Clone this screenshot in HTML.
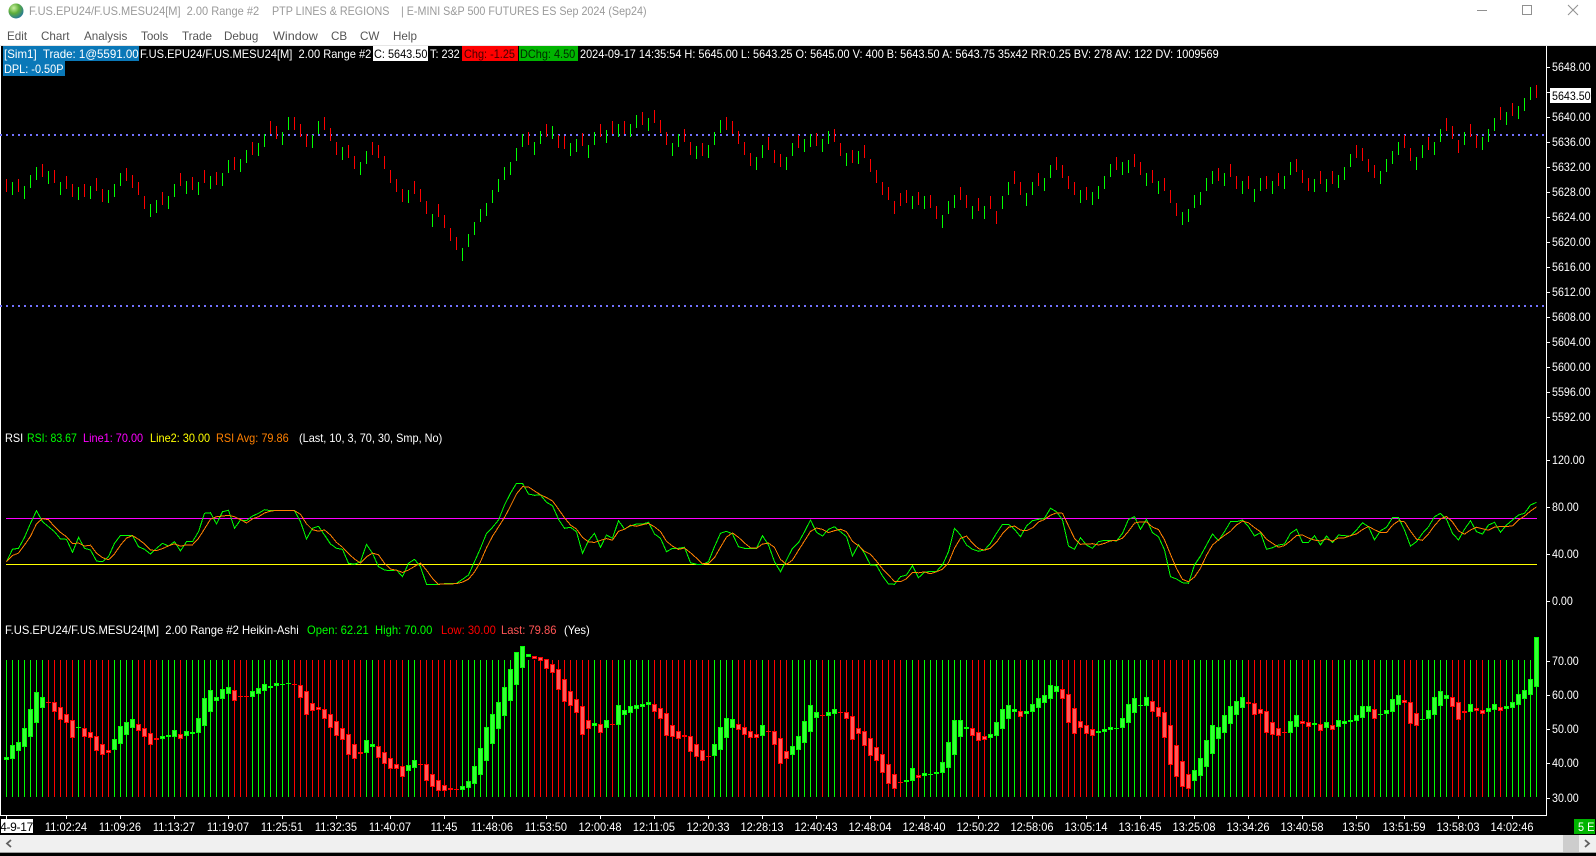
<!DOCTYPE html>
<html><head><meta charset="utf-8"><title>Chart</title>
<style>
html,body{margin:0;padding:0;background:#000;width:1596px;height:856px;overflow:hidden}
body{position:relative;font-family:"Liberation Sans",sans-serif;font-size:12px;color:#fff}
.a{position:absolute}
.t{position:absolute;white-space:pre;line-height:14px;height:14px;transform-origin:0 50%;transform:scaleX(.91)}
.c{position:absolute;white-space:pre;line-height:14px;height:14px;top:820px;transform:translateX(-50%) scaleX(.92)}
.tt{color:#9a9a9a;transform:scaleX(.895);top:4px}
.m{color:#555;transform:scaleX(.97);top:29px}
.y{left:1552px;transform:scaleX(.89)}
.h{top:623px;transform:scaleX(.935)}
</style></head><body>
<div class="a" style="left:0;top:0;width:1596px;height:45px;background:#fff"></div>
<div class="a" style="left:0;top:45px;width:1596px;height:1px;background:#e6e6e6"></div>
<svg class="a" style="left:7px;top:2px" width="18" height="18" viewBox="0 0 18 18"><defs><radialGradient id="gl" cx=".35" cy=".3" r=".8"><stop offset="0" stop-color="#c8f0a0"/><stop offset=".45" stop-color="#5fae3a"/><stop offset="1" stop-color="#1b6fa8"/></radialGradient></defs><circle cx="9" cy="9" r="7.5" fill="url(#gl)"/></svg>
<span class="t tt" style="left:29px;transform:scaleX(.92)">F.US.EPU24/F.US.MESU24[M]  2.00 Range #2</span>
<span class="t tt" style="left:272px">PTP LINES &amp; REGIONS</span>
<span class="t tt" style="left:401px">| E-MINI S&amp;P 500 FUTURES ES Sep 2024 (Sep24)</span>
<span class="t m" style="left:7px">Edit</span><span class="t m" style="left:41px">Chart</span><span class="t m" style="left:84px">Analysis</span><span class="t m" style="left:141px">Tools</span><span class="t m" style="left:182px">Trade</span><span class="t m" style="left:224px">Debug</span><span class="t m" style="left:273px;transform:scaleX(1.05)">Window</span><span class="t m" style="left:331px">CB</span><span class="t m" style="left:360px">CW</span><span class="t m" style="left:393px">Help</span>
<svg class="a" style="left:1470px;top:0" width="126" height="22" fill="none" stroke="#909090" stroke-width="1"><path d="M7 10.5h10"/><rect x="52.5" y="5.5" width="9" height="9"/><path d="M98 5l10 10M108 5l-10 10"/></svg>

<svg id="ch" class="a" style="left:0;top:0" width="1596" height="856" shape-rendering="crispEdges"></svg>

<div class="a" style="left:3px;top:46px;width:136px;height:15px;background:#0a78b8"></div>
<div class="a" style="left:3px;top:61px;width:62px;height:15px;background:#0a78b8"></div>
<div class="a" style="left:373px;top:46px;width:55px;height:15px;background:#fff"></div>
<div class="a" style="left:462px;top:46px;width:56px;height:15px;background:#f00"></div>
<div class="a" style="left:519px;top:46px;width:59px;height:15px;background:#00b400"></div>
<span class="t" style="left:4px;top:47px;transform:scaleX(.96)">[Sim1]  Trade: 1@5591.00</span>
<span class="t" style="left:140px;top:47px;transform:scaleX(.925)">F.US.EPU24/F.US.MESU24[M]  2.00 Range #2</span>
<span class="t" style="left:374px;top:47px;color:#000">C: 5643.50</span>
<span class="t" style="left:430px;top:47px">T: 232</span>
<span class="t" style="left:464px;top:47px;color:#400">Chg: -1.25</span>
<span class="t" style="left:520px;top:47px;color:#002800">DChg: 4.50</span>
<span class="t" style="left:580px;top:47px">2024-09-17 14:35:54 H: 5645.00 L: 5643.25 O: 5645.00 V: 400 B: 5643.50 A: 5643.75 35x42 RR:0.25 BV: 278 AV: 122 DV: 1009569</span>
<span class="t" style="left:4px;top:62px">DPL: -0.50P</span>

<span class="t" style="left:5px;top:431px">RSI</span>
<span class="t" style="left:27px;top:431px;color:#0f0;transform:scaleX(.88)">RSI: 83.67</span>
<span class="t" style="left:83px;top:431px;color:#f0f">Line1: 70.00</span>
<span class="t" style="left:150px;top:431px;color:#ff0">Line2: 30.00</span>
<span class="t" style="left:216px;top:431px;color:#ff8000">RSI Avg: 79.86</span>
<span class="t" style="left:299px;top:431px">(Last, 10, 3, 70, 30, Smp, No)</span>

<span class="t h" style="left:5px">F.US.EPU24/F.US.MESU24[M]  2.00 Range #2 Heikin-Ashi</span>
<span class="t h" style="left:307px;color:#0f0">Open: 62.21</span>
<span class="t h" style="left:375px;color:#0f0">High: 70.00</span>
<span class="t h" style="left:441px;color:#f00">Low: 30.00</span>
<span class="t h" style="left:501px;color:#ff5555">Last: 79.86</span>
<span class="t h" style="left:564px">(Yes)</span>

<span class="t y" style="top:60px">5648.00</span>
<span class="t y" style="top:110px">5640.00</span><span class="t y" style="top:135px">5636.00</span><span class="t y" style="top:160px">5632.00</span><span class="t y" style="top:185px">5628.00</span><span class="t y" style="top:210px">5624.00</span><span class="t y" style="top:235px">5620.00</span><span class="t y" style="top:260px">5616.00</span><span class="t y" style="top:285px">5612.00</span><span class="t y" style="top:310px">5608.00</span><span class="t y" style="top:335px">5604.00</span><span class="t y" style="top:360px">5600.00</span><span class="t y" style="top:385px">5596.00</span><span class="t y" style="top:410px">5592.00</span>
<div class="a" style="left:1550px;top:88px;width:41px;height:15px;background:#fff"></div>
<span class="t" style="left:1552px;top:89px;color:#000;transform:scaleX(.89)">5643.50</span>
<span class="t y" style="top:453px">120.00</span><span class="t y" style="top:500px">80.00</span><span class="t y" style="top:547px">40.00</span><span class="t y" style="top:594px">0.00</span>
<span class="t y" style="top:654px">70.00</span><span class="t y" style="top:688px">60.00</span><span class="t y" style="top:722px">50.00</span><span class="t y" style="top:756px">40.00</span><span class="t y" style="top:791px">30.00</span>

<div class="a" style="left:1px;top:819px;width:32px;height:14px;background:#fff"></div>
<span class="t" style="left:1px;top:820px;color:#000;width:32px;overflow:hidden;direction:rtl;transform:none;letter-spacing:-.3px"><bdi>4-9-17</bdi></span>
<span class="c" style="left:66px">11:02:24</span><span class="c" style="left:120px">11:09:26</span><span class="c" style="left:174px">11:13:27</span><span class="c" style="left:228px">11:19:07</span><span class="c" style="left:282px">11:25:51</span><span class="c" style="left:336px">11:32:35</span><span class="c" style="left:390px">11:40:07</span><span class="c" style="left:444px">11:45</span><span class="c" style="left:492px">11:48:06</span><span class="c" style="left:546px">11:53:50</span><span class="c" style="left:600px">12:00:48</span><span class="c" style="left:654px">12:11:05</span><span class="c" style="left:708px">12:20:33</span><span class="c" style="left:762px">12:28:13</span><span class="c" style="left:816px">12:40:43</span><span class="c" style="left:870px">12:48:04</span><span class="c" style="left:924px">12:48:40</span><span class="c" style="left:978px">12:50:22</span><span class="c" style="left:1032px">12:58:06</span><span class="c" style="left:1086px">13:05:14</span><span class="c" style="left:1140px">13:16:45</span><span class="c" style="left:1194px">13:25:08</span><span class="c" style="left:1248px">13:34:26</span><span class="c" style="left:1302px">13:40:58</span><span class="c" style="left:1356px">13:50</span><span class="c" style="left:1404px">13:51:59</span><span class="c" style="left:1458px">13:58:03</span><span class="c" style="left:1512px">14:02:46</span>
<div class="a" style="left:1574px;top:819px;width:21px;height:15px;background:#00b400"></div>
<span class="t" style="left:1578px;top:820px">5 E</span>

<div class="a" style="left:0;top:835px;width:1596px;height:17px;background:#f0f0f0"></div>
<div class="a" style="left:0;top:852px;width:1596px;height:1px;background:#a0a0a0"></div>
<div class="a" style="left:1563px;top:835px;width:16px;height:17px;background:#cdcdcd"></div>
<svg class="a" style="left:0;top:835px" width="1596" height="17" fill="none" stroke="#606060" stroke-width="1.8"><path d="M11 5l-4 3.5 4 3.5"/><path d="M1585 5l4 3.5-4 3.5"/></svg>

<script>
var M="r537 g545 r537 g558 g525 g501 r492 g513 r510 g546 r528 r552 g561 r552 g558 r534 r567 g570 g552 g519 r504 r525 r546 r588 g612 g600 r576 g588 g552 r519 g543 r531 g546 r510 g528 r516 g519 g480 r471 g477 g450 r426 g429 g402 r363 r378 g396 g351 r351 r372 r402 g405 g363 r351 r384 r426 g441 r435 r468 g486 g453 r426 r435 r468 r510 r537 r567 g570 r543 r567 r603 g642 r612 r645 r684 r711 g744 g702 g666 g627 g609 g570 g537 g501 g486 g444 g402 r396 g426 g393 r372 g378 r405 r408 g429 g417 r399 g435 g396 r372 g390 r363 g372 r363 g372 g345 r336 g354 r330 r360 r396 g429 g402 r387 r426 g438 r429 g435 g396 g360 r351 r363 r393 r426 r459 g471 g435 r411 r450 r462 g471 g429 r405 g417 g402 r399 g417 g393 r387 r429 g459 r450 g453 r435 r477 r510 r546 r561 r603 r579 r570 g588 r576 g588 r585 r618 g645 g603 g585 r561 r585 g618 r594 g618 r588 r633 g588 g546 r513 r546 g579 g546 r519 g534 g495 r471 r495 r528 r546 g570 r561 g576 g558 g528 g492 r471 g486 g480 r462 r486 g519 r510 g543 r534 r570 r609 g636 g627 g585 g576 g534 g513 r504 g519 r492 r528 g543 r528 g567 g534 r528 g543 r519 g528 g486 r477 r510 r534 g537 r513 g537 r513 g525 g501 g462 r435 r444 r477 r495 g513 g477 g453 g426 r405 r444 g471 g435 r411 g426 g387 r354 r378 r420 g396 r372 r405 g411 g387 g354 r321 g336 r309 g318 g294 g261 r255".split(" ");
var R1=[425,388,385,352,310,272,305,320,335,357,358,397,352,385,390,423,425,410,370,346,347,347,380,388,402,385,370,378,365,393,365,365,335,280,278,312,275,271,325,300,302,288,280,269,272,272,272,272,272,305,357,325,319,345,372,385,388,430,433,425,373,400,440,450,452,450,470,430,418,440,493,493,493,491,491,490,478,465,425,385,340,322,300,255,220,190,190,222,226];
var R2=[75,97,107,148,175,172,185,250,212,190,232,195,205,152,177,168,162,162,157,192,205,245,235,235,232,278,283,283,275,230,190,184,192,230,235,235,235,197,225,275,305,270,235,218,185,150,187,198,178,170,185,200,258,224,250,285,286,318,342,343,320,315,287,323,307,304,304,285,245,175,195,225,238,244,240,220,190,163,163,178,200,168,152,148,145,115,125,150,228,238,203,225,235,215,211,211,213,190,148,140,178,148,188,200,240,320,327,338,340,285,258,225,192,212,185,155,155,150,170,198,188,238,233,225,222,190,178,217,217,197,225,198,218,195,197,198,180,158,170,210,182,172,143,143,180,228,215,190,170,140,130,148,190,210,178,152,185,192,165,157,187,165,150,135,130,105,97];
var H="g412,419 g376,416 g367,394 g325,380 g268,352 g217,310 g232,263 r246,248 r247,277 r262,301 r283,310 r299,355 g322,325 r325,352 r337,355 r347,394 r371,406 r389,398 g356,391 g319,373 g307,346 g298,325 r313,334 r323,352 r338,376 r355,360 g347,358 g346,352 g331,350 r341,358 g334,349 g337,343 g295,340 g235,319 g211,277 g232,244 g208,238 g202,223 r211,244 r229,232 r229,232 g214,232 g205,223 g193,214 g197,205 g190,199 g191,193 g190,193 r193,196 r194,235 r214,286 r250,274 r262,271 r268,298 r283,325 r304,349 r325,361 r343,406 r373,418 r397,403 g361,400 g373,382 r379,415 r397,433 r415,448 r433,448 r439,472 g436,454 g421,445 r433,435 r433,484 r461,500 r481,514 r496,514 r505,511 r508,511 g499,511 g484,505 g439,493 g385,466 g322,424 g283,373 g247,328 g202,289 g148,244 g97,196 g79,145 g103,112 r109,116 r112,124 r118,148 r133,160 r148,211 r178,247 r214,259 r238,280 r259,346 r301,328 g310,317 r313,338 g301,325 r313,316 g256,316 g271,286 g259,280 g256,268 g253,262 g247,256 r253,277 r265,298 r280,349 r316,352 r334,358 r346,352 r349,397 r373,412 r391,424 r409,412 g373,409 g322,391 g295,355 g298,325 r313,331 r322,346 r334,355 r343,355 g316,349 r334,335 r334,376 r355,433 r394,418 g379,406 g349,391 g304,370 g256,337 g277,295 r286,289 g277,289 g268,283 r277,280 r277,298 r289,361 r325,343 r334,379 r355,409 r382,424 r403,460 r433,493 r463,508 r485,490 g481,487 g445,484 r466,475 g460,469 g463,466 g457,463 g427,460 g367,445 g301,406 g301,352 g322,327 r325,349 r337,364 r349,361 g343,355 g307,349 g268,328 g256,298 g268,277 r274,292 g274,283 g253,277 g235,265 g226,250 g196,238 g199,217 r208,238 r223,310 r265,343 r304,325 r316,343 r328,349 g334,338 g328,337 g322,331 g325,328 g295,325 g253,310 g235,280 g256,259 g232,259 r244,277 r262,292 r277,355 r316,436 r376,472 r424,502 r463,508 g451,484 g415,469 g361,442 g316,403 g322,358 g286,340 g259,313 g244,286 g232,265 r247,253 r250,286 r268,283 r274,340 r307,346 r325,349 r337,340 g304,340 g286,322 r304,313 r307,322 g310,316 r313,334 g307,325 r316,331 g301,322 g304,313 g301,307 g286,304 g259,295 g259,277 r268,298 g283,285 g271,283 g238,277 g226,256 r241,250 r247,313 r280,319 g298,299 g271,298 g232,286 g214,259 g226,238 r232,262 r247,301 r274,280 g253,277 r265,274 r271,283 g265,277 g253,271 r262,274 g259,268 g247,265 g223,256 g211,238 g178,226 g52,202".split(" ");
var s="",i;
function rc(x,y,w,h,f){return '<rect x="'+x+'" y="'+y+'" width="'+w+'" height="'+h+'" fill="'+f+'"/>'}
s+=rc(0,46,1,770,"#fff")+rc(1546,46,1,770,"#fff")+rc(0,815,1547,1,"#fff");
s+='<g shape-rendering="auto"><path d="M0 135H1546M0 306H1546" stroke="#7272ff" stroke-width="2" stroke-dasharray="2 4" fill="none"/></g>';
var ty=[67,92,117,142,167,192,217,242,267,292,317,342,367,392,417,460,507,554,601,661,695,729,763,798];
ty.forEach(function(y){s+=rc(1547,y,3,1,"#fff")});
[6,66,120,174,228,282,336,390,444,492,546,600,654,708,762,816,870,924,978,1032,1086,1140,1194,1248,1302,1356,1404,1458,1512].forEach(function(x){s+=rc(x,816,1,3,"#fff")});
M.forEach(function(t,i){s+=rc(6+6*i,Math.round(parseInt(t.slice(1))/3),1,13,t[0]=="r"?"#f00":"#0f0")});
s+=rc(6,518,1531,1,"#f0f")+rc(6,564,1531,1,"#ff0");
var ry=R1.map(function(v){return 420+v/3}).concat(R2.map(function(v){return 470+v/3}));
var a=[],b=[];
for(i=0;i<ry.length;i++){
 a.push((6.5+6*i)+","+ry[i].toFixed(1));
 var n=Math.max(0,i-2),t=0;for(var j=n;j<=i;j++)t+=ry[j];
 b.push((6.5+6*i)+","+(t/(i-n+1)).toFixed(1));
}
s+='<polyline points="'+a.join(" ")+'" fill="none" stroke="#0f0" stroke-width="1"/>';
s+='<polyline points="'+b.join(" ")+'" fill="none" stroke="#ff8000" stroke-width="1"/>';
H.forEach(function(t,i){
 var c=t[0]=="r",p=t.slice(1).split(","),x=6+6*i,top=Math.round(620+p[0]/3),bot=Math.round(620+p[1]/3),h=Math.max(1,bot-top);
 var col=c?"#f00":"#0f0",f=c?"#ff5a5a":"#35ff35";
 s+=rc(x,660,1,137,col);
 s+=rc(x-2,top,5,h,col);
 if(h>2)s+=rc(x-1,top+1,3,h-2,f);
});
document.getElementById("ch").innerHTML=s;
</script>
</body></html>
